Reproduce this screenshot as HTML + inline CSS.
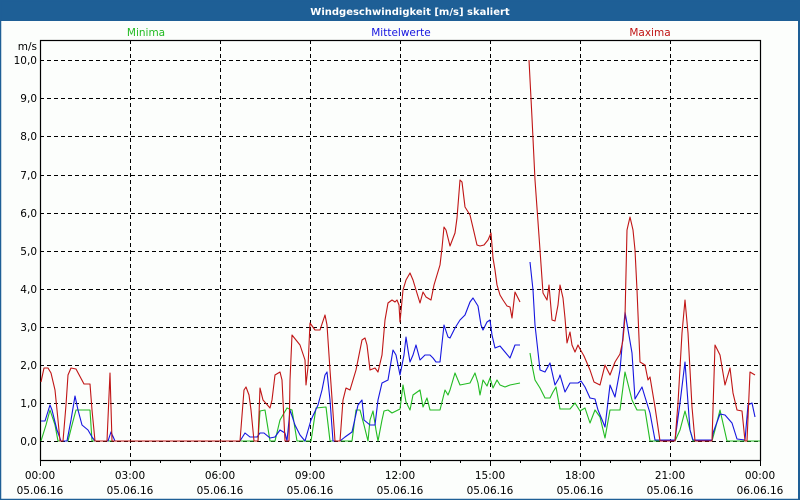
<!DOCTYPE html>
<html><head><meta charset="utf-8"><style>
html,body{margin:0;padding:0;width:800px;height:500px;overflow:hidden;background:#fcfefc}
svg{display:block}
text{font-family:"DejaVu Sans","Liberation Sans",sans-serif;font-size:10.5px}
</style></head><body>
<svg width="800" height="500" viewBox="0 0 800 500" xmlns="http://www.w3.org/2000/svg">
<rect x="0" y="0" width="800" height="500" fill="#fcfefc"/>
<rect x="0" y="0" width="800" height="21" fill="#1e5f96"/>
<rect x="0.5" y="0.5" width="799" height="499" fill="none" stroke="#1e5f96" stroke-width="1.5"/>
<rect x="798" y="0" width="2" height="500" fill="#1e5f96"/>
<text x="410" y="15" text-anchor="middle" fill="#fff" font-weight="bold" style="font-size:10px">Windgeschwindigkeit [m/s] skaliert</text>
<text x="146" y="36" text-anchor="middle" fill="#22bb22">Minima</text>
<text x="401" y="36" text-anchor="middle" fill="#1515e0">Mittelwerte</text>
<text x="650" y="36" text-anchor="middle" fill="#c01515">Maxima</text>
<text x="37" y="50" text-anchor="end" fill="#000">m/s</text>
<g fill="#000" text-anchor="end">
<text x="37" y="64">10,0</text><text x="37" y="102">9,0</text><text x="37" y="140">8,0</text><text x="37" y="179">7,0</text><text x="37" y="217">6,0</text><text x="37" y="255">5,0</text><text x="37" y="293">4,0</text><text x="37" y="331">3,0</text><text x="37" y="369">2,0</text><text x="37" y="407">1,0</text><text x="37" y="445">0,0</text>
</g>
<g stroke="#000" stroke-width="1" stroke-dasharray="4,3" fill="none">
<path d="M40 60.5H760M40 98.5H760M40 136.5H760M40 175.5H760M40 213.5H760M40 251.5H760M40 289.5H760M40 327.5H760M40 365.5H760M40 403.5H760M40 441.5H760"/>
<path d="M130.5 40V460M220.5 40V460M310.5 40V460M400.5 40V460M490.5 40V460M580.5 40V460M670.5 40V460"/>
</g>
<rect x="40.5" y="40.5" width="720" height="420" fill="none" stroke="#000" stroke-width="1.2"/>
<g stroke="#000" stroke-width="1">
<path d="M40.5 460v6M70.5 460v3M100.5 460v3M130.5 460v6M160.5 460v3M190.5 460v3M220.5 460v6M250.5 460v3M280.5 460v3M310.5 460v6M340.5 460v3M370.5 460v3M400.5 460v6M430.5 460v3M460.5 460v3M490.5 460v6M520.5 460v3M550.5 460v3M580.5 460v6M610.5 460v3M640.5 460v3M670.5 460v6M700.5 460v3M730.5 460v3M760.5 460v6"/>
</g>
<g fill="#000" text-anchor="middle">
<text x="40" y="479">00:00</text><text x="130" y="479">03:00</text><text x="220" y="479">06:00</text><text x="310" y="479">09:00</text><text x="400" y="479">12:00</text><text x="490" y="479">15:00</text><text x="580" y="479">18:00</text><text x="670" y="479">21:00</text><text x="760" y="479">00:00</text>
<text x="40" y="494">05.06.16</text><text x="130" y="494">05.06.16</text><text x="220" y="494">05.06.16</text><text x="310" y="494">05.06.16</text><text x="400" y="494">05.06.16</text><text x="490" y="494">05.06.16</text><text x="580" y="494">05.06.16</text><text x="670" y="494">05.06.16</text><text x="760" y="494">06.06.16</text>
</g>
<g fill="none" stroke-width="1.1" stroke-linejoin="round">
<polyline stroke="#22bb22" points="41,441 46,425 50,410 55,425 58,441 68,441 72,425 76,410 90,410 92,441 240,441 258,441 260,411 265,410 270,441 275,441 280,420 287,408 292,410 297,441 311,441 316,408 326,407 330,441 352,441 356,410 360,410 364,425 368,441 370,420 373,411 376,430 378,441 382,420 384,411 388,410 392,413 396,411 400,409 403,385 406,402 410,410 413,395 420,390 423,407 427,398 430,410 440,410 445,390 448,395 450,390 455,373 460,385 465,384 470,383 475,373 478,383 480,395 483,380 487,386 490,378 493,388 497,380 500,385 505,387 510,385 520,383"/>
<polyline stroke="#22bb22" points="530,353 532,365 535,380 540,388 545,398 550,398 553,392 556,387 560,409 570,409 575,403 580,411 585,408 590,423 595,410 600,417 605,438 610,410 620,410 625,372 632,400 637,410 645,410 650,441 675,441 680,430 685,411 690,430 693,441 712,441 715,430 720,410 727,441 760,441"/>
<polyline stroke="#1515e0" points="41,421 45,421 50,405 52,410 57,430 61,441 67,441 71,420 75,396 78,410 82,425 88,430 92,437 95,441 108,441 111,432 115,441 240,441 245,433 250,437 257,437 260,433 264,433 270,438 275,437 280,430 285,433 287,441 290,410 295,425 300,435 305,441 311,420 318,405 322,390 325,375 327,372 330,400 333,441 340,441 345,437 352,432 358,405 362,400 364,420 370,425 375,425 378,400 382,383 388,380 393,350 396,355 398,365 400,375 402,365 404,355 406,337 408,350 410,362 413,355 416,345 420,360 425,355 430,355 433,358 436,362 440,362 444,325 448,337 450,338 455,328 460,320 465,315 470,302 473,298 478,306 481,325 483,330 487,322 490,320 492,335 495,348 500,346 505,352 510,358 515,345 520,345"/>
<polyline stroke="#1515e0" points="530,262 533,290 535,325 540,370 545,372 550,363 555,385 559,378 560,375 565,392 570,383 578,383 581,381 585,387 590,398 595,399 598,410 603,422 605,427 610,385 615,397 620,370 625,312 632,353 635,399 642,387 645,397 650,413 655,440 675,440 680,403 685,362 690,430 693,440 712,440 713,433 720,414 725,415 732,423 737,439 745,440 748,405 752,403 755,417"/>
<polyline stroke="#c01515" points="41,382 44,368 48,368 51,373 55,390 58,420 60,441 63,441 66,405 68,375 71,368 76,369 84,384 90,384 92,410 95,441 107,441 110,373 112,441 240,441 244,390 246,387 249,395 251,410 254,441 258,441 260,388 263,400 270,408 272,400 275,375 280,372 282,380 285,441 289,441 290,380 292,335 300,345 305,360 306,385 308,367 310,323 315,330 320,330 325,315 327,325 330,370 335,441 340,441 343,400 346,388 350,390 356,370 362,340 365,338 367,345 370,370 375,368 378,372 382,355 385,320 388,303 392,300 395,302 397,300 399,305 400,322 403,290 406,280 410,273 413,280 416,290 420,303 423,292 426,297 431,300 434,285 437,275 440,265 442,248 444,227 446,230 450,246 455,233 457,218 460,180 462,182 465,207 470,215 474,232 477,245 480,246 484,245 488,240 491,233 493,258 495,270 497,285 500,295 503,300 507,306 510,307 512,318 515,292 520,302"/>
<polyline stroke="#c01515" points="529,60 532,118 535,180 540,250 543,293 547,300 549,285 552,320 555,321 558,305 560,285 563,298 565,318 567,343 570,332 572,345 575,352 578,345 580,349 584,356 590,370 594,382 600,385 605,365 610,375 615,362 620,354 623,340 625,317 627,230 630,217 633,230 635,250 637,290 640,362 645,365 648,380 650,377 655,407 660,441 675,441 678,403 682,333 685,300 688,333 692,407 695,441 712,441 715,345 720,355 725,385 730,368 733,393 737,410 742,411 745,441 747,441 750,372 755,375"/>
</g>
</svg>
</body></html>
